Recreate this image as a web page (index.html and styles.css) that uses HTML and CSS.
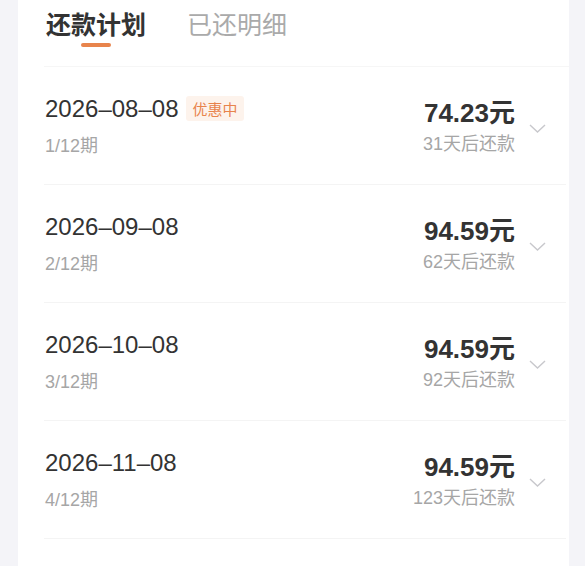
FILE: index.html
```html
<!DOCTYPE html>
<html lang="zh-CN">
  <head>
    <meta charset="UTF-8" />
    <meta name="viewport" content="width=device-width, initial-scale=1.0" />
    <title>还款计划</title>
    <link rel="stylesheet" href="styles.css">
  </head>

  <body>
    <div class="card">
      <div class="tabs">
        <div class="tab active">还款计划</div>
        <div class="tab">已还明细</div>
      </div>

      <div class="plan">
        <div class="row">
          <div class="left">
            <div class="date">2026–08–08 <span class="tag">优惠中</span></div>
            <div class="sub">1/12期</div>
          </div>
          <div class="right">
            <div class="amount">74.23元</div>
            <div class="sub">31天后还款</div>
          </div>
          <svg class="arrow" width="17" height="9" viewBox="0 0 17 9"><path d="M1 1l7.5 7 7.5-7" fill="none" stroke="#c8c8cc" stroke-width="1.4"/></svg>
        </div>
        <div class="row">
          <div class="left">
            <div class="date">2026–09–08</div>
            <div class="sub">2/12期</div>
          </div>
          <div class="right">
            <div class="amount">94.59元</div>
            <div class="sub">62天后还款</div>
          </div>
          <svg class="arrow" width="17" height="9" viewBox="0 0 17 9"><path d="M1 1l7.5 7 7.5-7" fill="none" stroke="#c8c8cc" stroke-width="1.4"/></svg>
        </div>
        <div class="row">
          <div class="left">
            <div class="date">2026–10–08</div>
            <div class="sub">3/12期</div>
          </div>
          <div class="right">
            <div class="amount">94.59元</div>
            <div class="sub">92天后还款</div>
          </div>
          <svg class="arrow" width="17" height="9" viewBox="0 0 17 9"><path d="M1 1l7.5 7 7.5-7" fill="none" stroke="#c8c8cc" stroke-width="1.4"/></svg>
        </div>
        <div class="row">
          <div class="left">
            <div class="date">2026–11–08</div>
            <div class="sub">4/12期</div>
          </div>
          <div class="right">
            <div class="amount">94.59元</div>
            <div class="sub">123天后还款</div>
          </div>
          <svg class="arrow" width="17" height="9" viewBox="0 0 17 9"><path d="M1 1l7.5 7 7.5-7" fill="none" stroke="#c8c8cc" stroke-width="1.4"/></svg>
        </div>
      </div>
    </div>
  </body>
</html>
```

FILE: styles.css
```css
body {
  margin: 0;
  background: #f4f4f8;
  font-family: "Liberation Sans", "Noto Sans CJK SC", sans-serif;
  color: #333;
}

.card {
  margin: 0 16px 0 18px;
  min-height: 566px;
  background: #fff;
}

.tabs {
  display: flex;
  gap: 41px;
  height: 66px;
  margin-left: 26px;
  padding-left: 2px;
  border-bottom: 1px solid #f6f6f6;
  font-family: "Noto Sans CJK SC", sans-serif;
}

.tab {
  position: relative;
  font-size: 25px;
  line-height: 46px;
  color: #aaa;
}

.tab.active {
  color: #333;
  font-weight: bold;
}

.tab.active::after {
  content: "";
  position: absolute;
  left: 35px;
  top: 43px;
  width: 30px;
  height: 4px;
  border-radius: 2px;
  background: #e8844c;
}

.row {
  display: flex;
  align-items: center;
  height: 117px;
  margin: 0 3px 0 26px;
  padding-right: 20px;
  border-bottom: 1px solid #f4f4f4;
}

.left {
  flex: 1;
  padding-left: 1px;
}

.date {
  display: flex;
  align-items: center;
  gap: 8px;
  font-size: 24px;
  line-height: 30px;
  color: #333;
}

.tag {
  padding: 0 6px;
  font-family: "Noto Sans CJK SC", sans-serif;
  font-size: 15px;
  line-height: 25px;
  color: #e8844c;
  background: #fdf3ec;
  border-radius: 3px;
}

.sub {
  margin-top: 10px;
  font-size: 18px;
  line-height: 24px;
  color: #a6a6a6;
}

.right {
  text-align: right;
}

.amount {
  font-size: 26px;
  font-weight: bold;
  line-height: 34px;
}

.right .sub {
  margin-top: 2px;
}

.arrow {
  margin-left: 14px;
  margin-top: 6px;
}
```
